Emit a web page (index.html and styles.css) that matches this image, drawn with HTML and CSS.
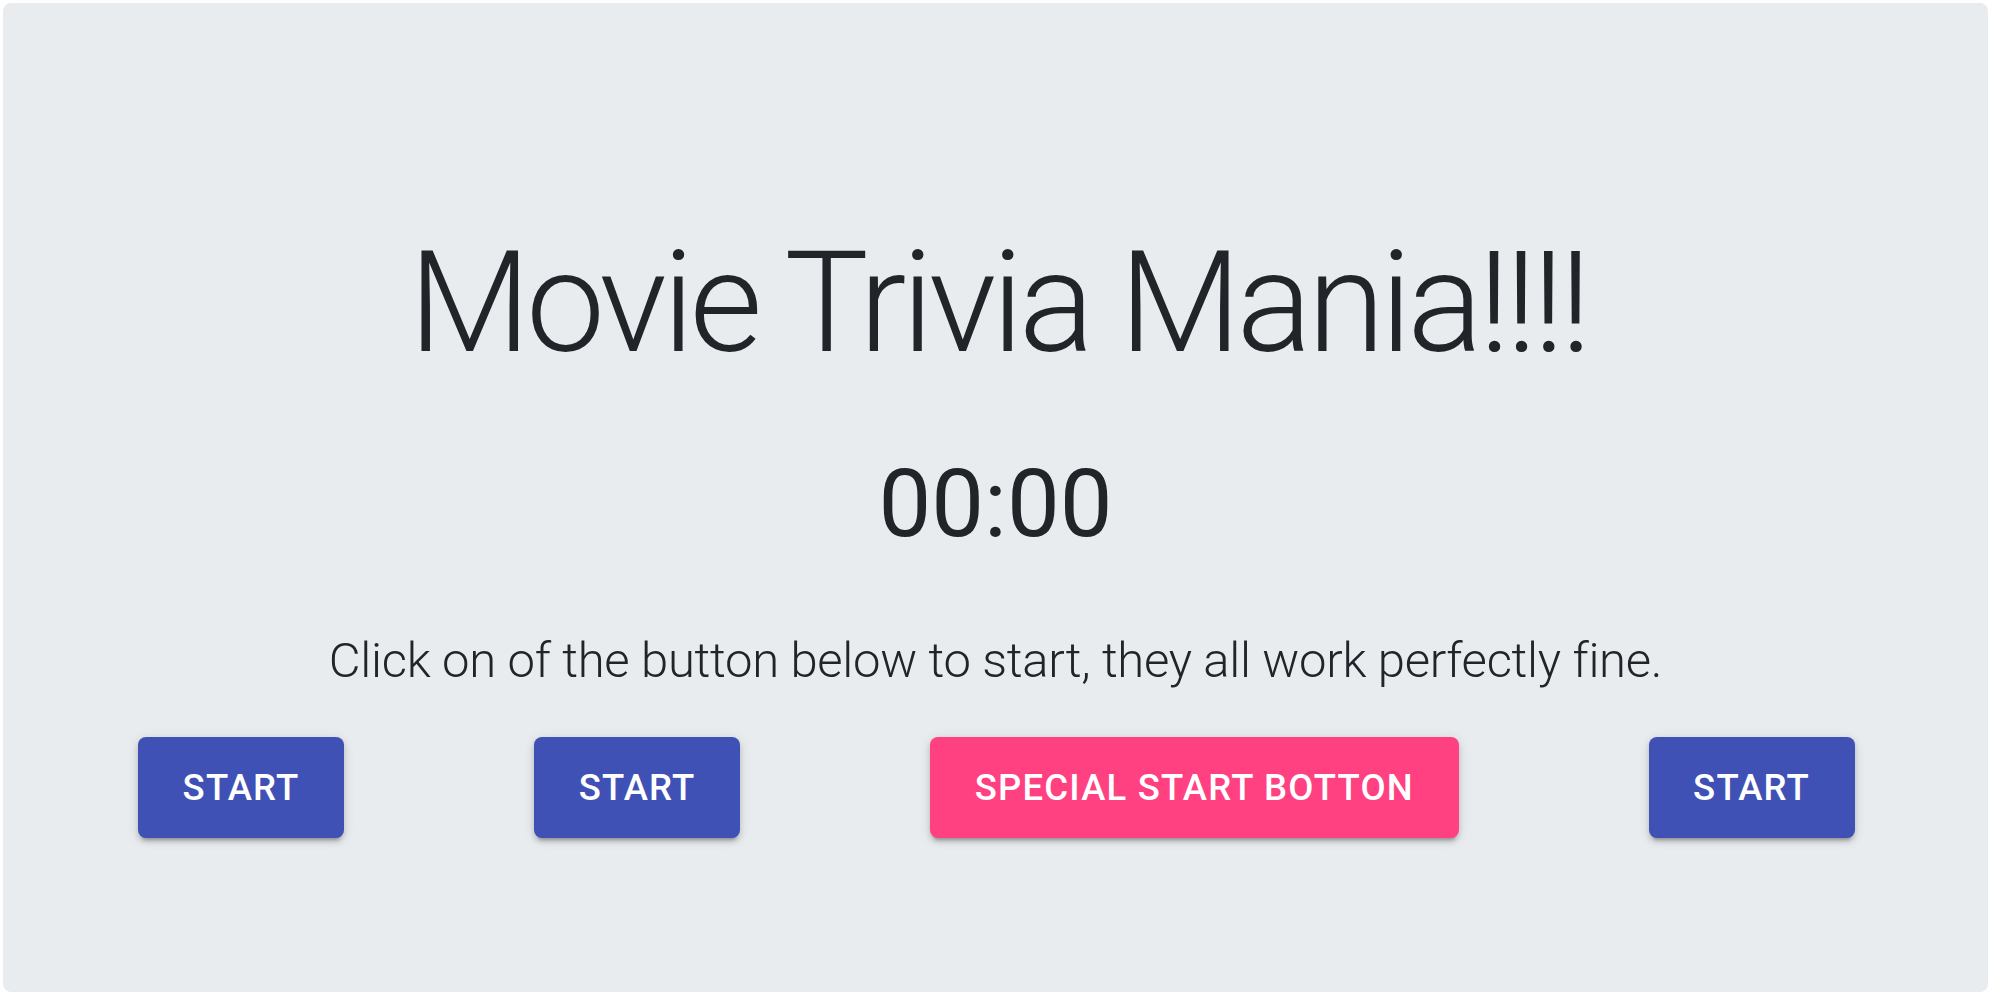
FILE: index.html
```html
<!DOCTYPE html>
<html lang="en">
<head>
<meta charset="utf-8">
<title>Movie Trivia Mania</title>
<link rel="stylesheet" href="styles.css">
</head>
<body>
<main class="jumbotron">
  <h1 class="title">Movie Trivia Mania!!!!</h1>
  <h2 class="timer">00:00</h2>
  <p class="lead">Click on of the button below to start, they all work perfectly fine.</p>
  <div class="actions">
    <button class="btn btn-primary">Start</button>
    <button class="btn btn-primary">Start</button>
    <button class="btn btn-accent">Special Start Botton</button>
    <button class="btn btn-primary">Start</button>
  </div>
</main>
</body>
</html>
```
FILE: styles.css
```css
html, body {
  margin: 0;
  padding: 0;
  background: #ffffff;
}
body {
  padding: 3px 2px 4px 3px;
  font-family: Roboto, "Liberation Sans", sans-serif;
  color: #212529;
}
.jumbotron {
  box-sizing: border-box;
  height: 989px;
  background: #e9ecef;
  border-radius: 8px;
  display: flex;
  flex-direction: column;
  align-items: center;
  padding-top: 215px;
}
.title {
  margin: 0;
  font-size: 141px;
  font-weight: 300;
  line-height: 1.2;
  letter-spacing: -4.7px;
  text-indent: 4.7px;
}
.timer {
  margin: 61px 0 0;
  font-size: 94px;
  font-weight: 400;
  line-height: 1.2;
}
.lead {
  margin: 63px 0 0;
  font-size: 49px;
  font-weight: 300;
  line-height: 1.5;
  letter-spacing: -0.3px;
}
.actions {
  align-self: stretch;
  display: flex;
  align-items: center;
  column-gap: 190px;
  margin-top: 40px;
  padding-left: 135px;
}
.btn {
  box-sizing: border-box;
  height: 101px;
  padding: 0 44.6px;
  border: none;
  border-radius: 8px;
  font-family: Roboto, "Liberation Sans", sans-serif;
  font-size: 36.5px;
  font-weight: 500;
  letter-spacing: 1.2px;
  text-transform: uppercase;
  color: #ffffff;
  box-shadow: 0 6px 3px -4px rgba(0,0,0,.2), 0 4px 5px 0 rgba(0,0,0,.14), 0 2px 12px 0 rgba(0,0,0,.12);
}
.btn-primary { background: #3f51b5; }
.btn-accent { background: #ff4081; }
```
